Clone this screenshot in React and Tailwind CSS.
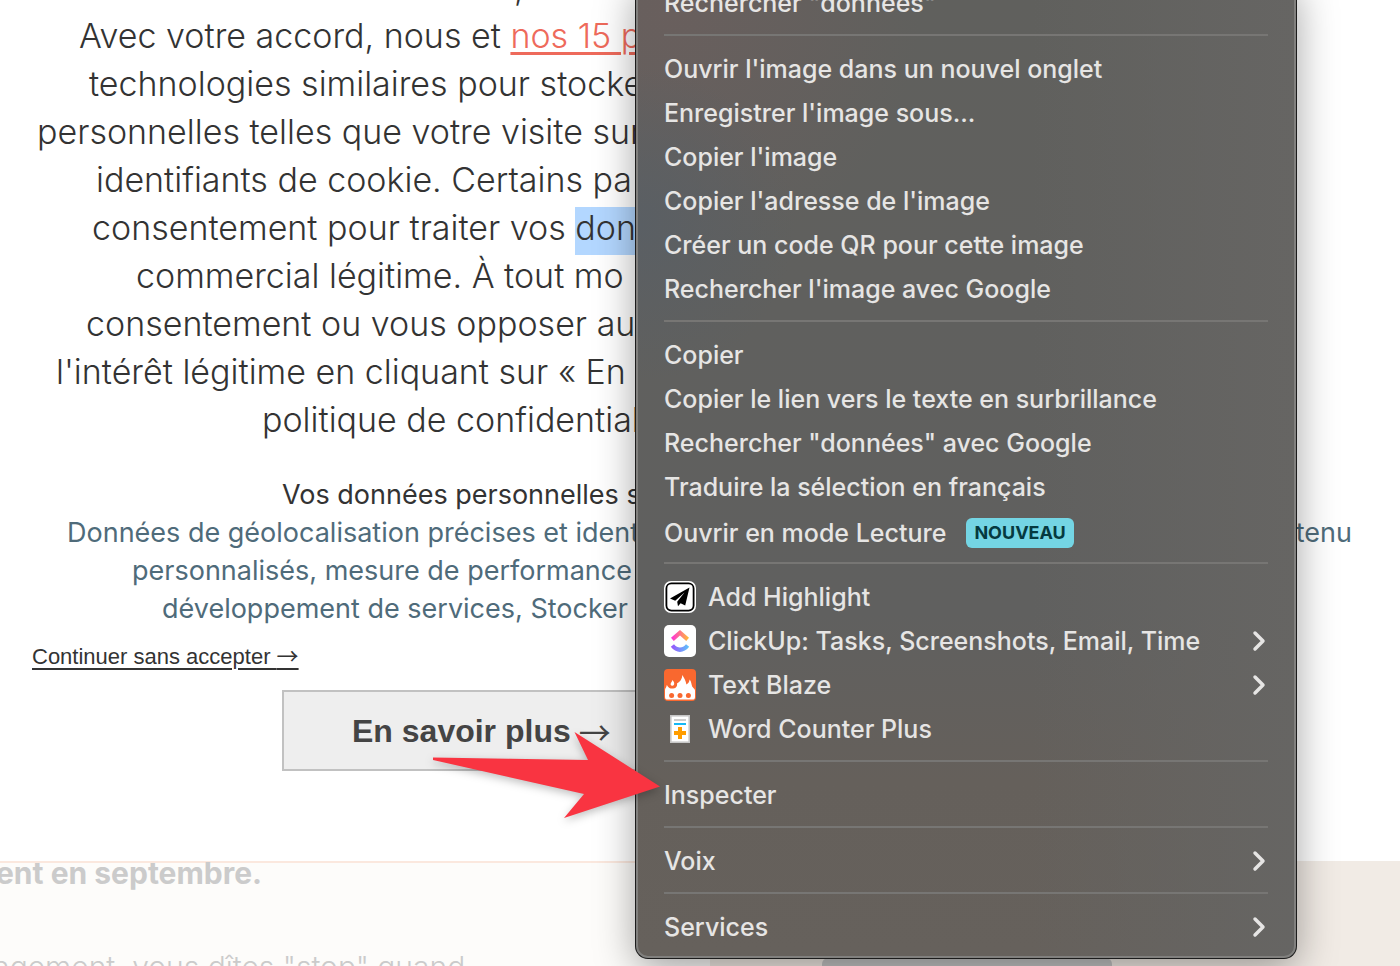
import React from "react";
import { ChevronRight } from "lucide-react";

const CONSENT_LINES = [
  { pad: "pl-[514px]", text: "," },
  { pad: "pl-[79px]", text: "Avec votre accord, nous et ", link: "nos 15 partenaires" },
  { pad: "pl-[89px]", text: "technologies similaires pour stocker" },
  { pad: "pl-[37px]", text: "personnelles telles que votre visite sur" },
  { pad: "pl-[96px]", text: "identifiants de cookie. Certains pa" },
  { pad: "pl-[92px]", text: "consentement pour traiter vos ", mark: "données" },
  { pad: "pl-[136px]", text: "commercial légitime. À tout mo" },
  { pad: "pl-[86px]", text: "consentement ou vous opposer au" },
  { pad: "pl-[56px]", text: "l'intérêt légitime en cliquant sur « En" },
  { pad: "pl-[262px]", text: "politique de confidentialité" },
];

function HighlightIcon() {
  return (
    <svg viewBox="0 0 32 32" className="size-8 shrink-0" aria-hidden="true">
      <rect x="0" y="0" width="32" height="32" rx="7" fill="#fff" />
      <rect x="2.4" y="2.4" width="27.2" height="27.2" rx="5" fill="#fff" stroke="#000" strokeWidth="1.8" />
      <path d="M25.5 6.5 L6 17.6 L11.2 19.8 L20.5 11.5 L13.2 20.8 L14 25.2 L16.6 22.2 L21.2 24.6 Z" fill="#000" />
    </svg>
  );
}

function ClickUpIcon() {
  return (
    <svg viewBox="0 0 32 32" className="size-8 shrink-0" aria-hidden="true">
      <defs>
        <linearGradient id="cu-top" x1="0" x2="1">
          <stop offset="0" stopColor="#ff2be0" />
          <stop offset="1" stopColor="#ffc02e" />
        </linearGradient>
        <linearGradient id="cu-bottom" x1="0" x2="1">
          <stop offset="0" stopColor="#9a50fb" />
          <stop offset="1" stopColor="#5cc6fa" />
        </linearGradient>
      </defs>
      <rect width="32" height="32" rx="5" fill="#fff" />
      <path d="M16 5 L25 12.8 L22.2 16 L16 10.6 L9.8 16 L7 12.8 Z" fill="url(#cu-top)" />
      <path d="M6.8 21.8 L10 19.3 C13.5 23.6 18.5 23.6 22 19.3 L25.2 21.8 C20 28.6 12 28.6 6.8 21.8 Z" fill="url(#cu-bottom)" />
    </svg>
  );
}

function BlazeIcon() {
  return (
    <svg viewBox="0 0 32 32" className="size-8 shrink-0" aria-hidden="true">
      <rect width="32" height="32" rx="4" fill="#f9682f" />
      <path d="M1 28 V21 C1 19 2.6 18.4 2.8 16 C4 17.5 4.6 19.6 8 19.6 C11.4 19.6 13.6 17.6 13 14.4 C16 13 18.2 10 18.4 6 C20 9 22 12 22.4 15.4 C24.4 14.4 25.4 12.6 25.6 10.4 C27.8 13 27.4 16.4 28.6 18 C29.6 19.4 31 20 31 21.6 V28 Q31 30.6 28.4 30.6 H3.6 Q1 30.6 1 28 Z" fill="#fff" />
      <path d="M8.4 11 C10.4 13.4 10.6 14.6 9.8 16 C9 17.2 6.8 16.8 6.6 15.2 C6.5 13.8 8.2 13 8.4 11 Z" fill="#fff" />
      <circle cx="7.6" cy="26.6" r="2.5" fill="#f9682f" />
      <circle cx="16" cy="26.6" r="2.5" fill="#f9682f" />
      <circle cx="24.4" cy="26.6" r="2.5" fill="#f9682f" />
    </svg>
  );
}

function CounterIcon() {
  return (
    <svg viewBox="0 0 32 32" className="size-8 shrink-0" aria-hidden="true">
      <rect x="6.8" y="2.8" width="18.4" height="26.4" fill="#fff" stroke="#c6c6c6" strokeWidth="1.6" />
      <rect x="10" y="6" width="12" height="2" fill="#ccc" />
      <rect x="10" y="10" width="12" height="2" fill="#16b9f5" />
      <path d="M14 14 H18 V18 H22 V22 H18 V26 H14 V22 H10 V18 H14 Z" fill="#ff9d00" />
    </svg>
  );
}

const MENU = [
  [{ label: 'Rechercher "données"' }],
  [
    { label: "Ouvrir l'image dans un nouvel onglet" },
    { label: "Enregistrer l'image sous..." },
    { label: "Copier l'image" },
    { label: "Copier l'adresse de l'image" },
    { label: "Créer un code QR pour cette image" },
    { label: "Rechercher l'image avec Google" },
  ],
  [
    { label: "Copier" },
    { label: "Copier le lien vers le texte en surbrillance" },
    { label: 'Rechercher "données" avec Google' },
    { label: "Traduire la sélection en français" },
    { label: "Ouvrir en mode Lecture", badge: "NOUVEAU" },
  ],
  [
    { label: "Add Highlight", Icon: HighlightIcon },
    { label: "ClickUp: Tasks, Screenshots, Email, Time", Icon: ClickUpIcon, sub: true },
    { label: "Text Blaze", Icon: BlazeIcon, sub: true },
    { label: "Word Counter Plus", Icon: CounterIcon },
  ],
  [{ label: "Inspecter" }],
  [{ label: "Voix", sub: true }],
  [{ label: "Services", sub: true }],
];

function MenuItem({ label, Icon, badge, sub }) {
  return (
    <button
      type="button"
      role="menuitem"
      className={`flex h-11 w-full items-center whitespace-nowrap text-left ${badge ? "pt-1" : ""}`}
    >
      {Icon && (
        <span className="mr-3 flex">
          <Icon />
        </span>
      )}
      <span>{label}</span>
      {badge && (
        <span className="ml-5 flex h-[30px] items-center rounded-md bg-[#74d5e4] px-2 text-lg font-bold text-[#053a40]">
          {badge}
        </span>
      )}
      {sub && <ChevronRight className="-mr-[7px] ml-auto size-8" strokeWidth={2.6} aria-hidden="true" />}
    </button>
  );
}

function ContextMenu() {
  return (
    <div
      role="menu"
      className="absolute -top-[21px] left-[636px] w-[660px] rounded-xl border-2 border-[#81807e] bg-[#62615e] bg-[radial-gradient(circle_at_0%_25%,#5a5f64_0%,transparent_16%),radial-gradient(circle_at_5%_3%,#695f5d_0%,transparent_22%),linear-gradient(90deg,transparent_60%,#666563_100%),linear-gradient(180deg,#60605d_0%,#60605f_65%,#65605b_82%,#66615c_100%)] px-[26px] pb-[7px] text-[25px] font-medium leading-none text-[#e6e5e4] shadow-[0_0_0_1px_#1c1c1c,0_10px_40px_rgba(0,0,0,0.38)] font-['Inter',sans-serif]"
    >
      {MENU.map((group, i) => (
        <div key={group[0].label} role="group" className={i > 0 ? "mt-[9px] border-t-2 border-[#777674] pt-[11px]" : ""}>
          {group.map((item) => (
            <MenuItem key={item.label} {...item} />
          ))}
        </div>
      ))}
    </div>
  );
}

function Arrow() {
  return <span className="font-normal leading-none font-['Noto_Sans_CJK_JP',sans-serif]">→</span>;
}

export default function App() {
  return (
    <div className="relative flex h-screen flex-col overflow-hidden bg-white font-['Inter',sans-serif] text-[#333]">
      <main className="-mt-9 shrink-0">
        <div className="whitespace-nowrap text-[34px] font-light leading-[48px]">
          {CONSENT_LINES.map((line) => (
            <p key={line.pad} className={line.pad}>
              {line.text}
              {line.link && (
                <a href="#partenaires" className="text-[#ee6a5b] underline decoration-[3px] underline-offset-4">
                  {line.link}
                </a>
              )}
              {line.mark && (
                <mark className="-mb-1.5 inline-block bg-[#b3d7ff] pb-1.5 leading-[42px] text-[#333]">{line.mark}</mark>
              )}
            </p>
          ))}
        </div>
        <div className="mt-8 whitespace-nowrap text-[27px] leading-[38px] text-[#4f6b7a]">
          <p className="pl-[282px] text-[#333]">Vos données personnelles sont</p>
          <p className="flex justify-between pl-[67px] pr-12">
            <span>Données de géolocalisation précises et ident</span>
            <span>contenu</span>
          </p>
          <p className="pl-[132px]">personnalisés, mesure de performance</p>
          <p className="pl-[162px]">développement de services, Stocker</p>
        </div>
        <div className="mt-[13px] flex pl-8 font-['Liberation_Sans',Arial,sans-serif]">
          <a href="#continuer" className="text-[22px] leading-8 underline decoration-2 underline-offset-4">
            Continuer sans accepter <Arrow />
          </a>
        </div>
        <div className="mt-[17px] px-[282px] font-['Liberation_Sans',Arial,sans-serif]">
          <button
            type="button"
            className="flex h-[81px] w-full items-center gap-2 border-2 border-[#c1c1c1] bg-[#eee] pl-[68px] text-[32px] font-bold text-[#444]"
          >
            En savoir plus <Arrow />
          </button>
        </div>
      </main>
      <section className="mt-[90px] flex min-h-0 flex-1 overflow-hidden whitespace-nowrap text-[#cbcbcb]">
        <div className="w-[710px] border-t-2 border-[#fbe8de] bg-[#fdfcfa]">
          <p className="-ml-1 text-[30px] font-bold leading-[20px]">ent en septembre.</p>
          <p className="-ml-2 mt-[60px] text-[30px] font-light leading-[48px]">ngement, vous dîtes "stop" quand</p>
        </div>
        <div className="flex flex-1 items-end bg-[#f1ebe5] pl-28">
          <div className="h-2 w-[290px] rounded-t-md bg-[#c4c4c4]" />
        </div>
      </section>
      <ContextMenu />
      <svg
        viewBox="0 0 228 86"
        className="absolute left-[432px] top-[732px] h-[86px] w-[228px] overflow-visible drop-shadow-[0_3px_4px_rgba(0,0,0,0.25)]"
        aria-hidden="true"
      >
        <path d="M1 25.5 L156 28 L142.5 0 L228 54.5 L132 86 L152 62 L1 28 Z" fill="#f93441" />
      </svg>
    </div>
  );
}
